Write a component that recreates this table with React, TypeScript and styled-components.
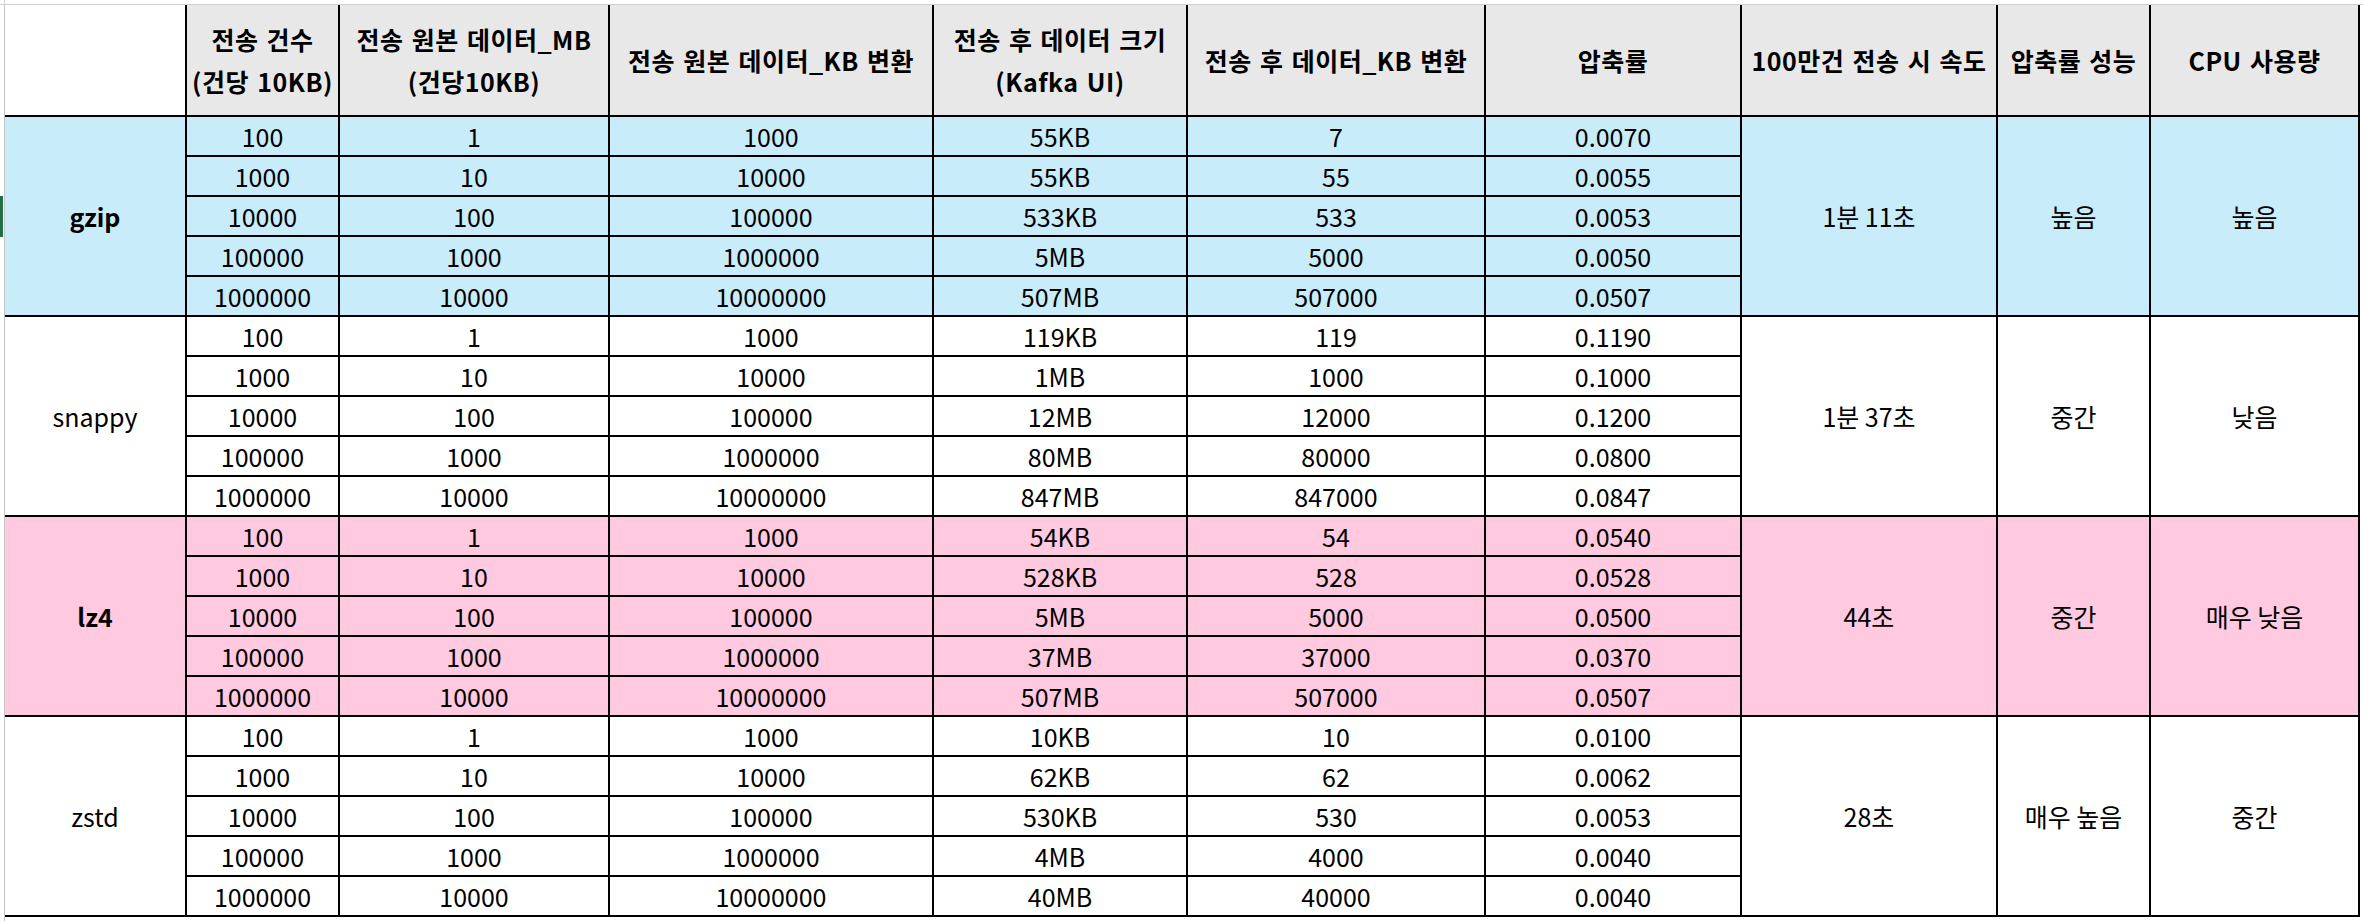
import React from 'react';
import styled, { createGlobalStyle } from 'styled-components';

const GlobalStyle = createGlobalStyle`
  html, body {
    margin: 0;
    padding: 0;
    background: #ffffff;
  }
  body {
    font-family: 'Noto Sans CJK KR', 'Noto Sans', sans-serif;
    color: #000000;
  }
`;

const colors = {
  header: '#e8e8e8',
  blue: '#c9ecfa',
  pink: '#ffc9df',
  white: '#ffffff',
  line: '#000000',
  grid: '#d0d0d0',
  excelGreen: '#1e7145',
};

const columnWidths = [182, 153, 270, 324, 254, 298, 256, 256, 153, 209];

const Page = styled.div`
  display: grid;
  grid-template-columns: 5px auto;
  grid-template-rows: 5px auto;
  width: 2363px;
  height: 921px;
  overflow: hidden;
`;

const Corner = styled.div`
  box-sizing: border-box;
  border-right: 1px solid ${colors.grid};
  border-bottom: 1px solid ${colors.grid};
`;

const TopStrip = styled.div`
  box-sizing: border-box;
  border-bottom: 1px solid ${colors.grid};
`;

const Gutter = styled.div`
  box-sizing: border-box;
  border-right: 1px solid #c4c4c4;
  display: flex;
  flex-direction: column;
`;

const SelectionMark = styled.div`
  margin-top: 191px;
  width: 3px;
  height: 41px;
  background: ${colors.excelGreen};
`;

const Sheet = styled.div`
  display: grid;
  grid-template-columns: ${columnWidths.map((w) => `${w}px`).join(' ')};
  grid-template-rows: 112px repeat(20, 40px);
  align-content: start;
`;

const Cell = styled.div<{ $fill?: string; $bold?: boolean; $span?: number }>`
  box-sizing: border-box;
  display: flex;
  align-items: center;
  justify-content: center;
  text-align: center;
  white-space: nowrap;
  border-right: 2px solid ${colors.line};
  border-bottom: 2px solid ${colors.line};
  background: ${(p) => p.$fill ?? 'transparent'};
  grid-row: ${(p) => (p.$span ? `span ${p.$span}` : 'auto')};
  font-size: 25px;
  font-weight: ${(p) => (p.$bold ? 700 : 400)};
  line-height: 1;
  padding-top: 1px;
`;

const HeaderCell = styled(Cell)`
  flex-direction: column;
  font-size: 25px;
  line-height: 42px;
  font-weight: 700;
  letter-spacing: 0.5px;
  word-spacing: 2px;
  padding-top: 0;
`;

interface Group {
  name: string;
  bold: boolean;
  fill: string;
  rows: string[][];
  speed: string;
  ratio: string;
  cpu: string;
}

const headers: string[][] = [
  [],
  ['전송 건수', '(건당 10KB)'],
  ['전송 원본 데이터_MB', '(건당10KB)'],
  ['전송 원본 데이터_KB 변환'],
  ['전송 후 데이터 크기', '(Kafka UI)'],
  ['전송 후 데이터_KB 변환'],
  ['압축률'],
  ['100만건 전송 시 속도'],
  ['압축률 성능'],
  ['CPU 사용량'],
];

const counts = ['100', '1000', '10000', '100000', '1000000'];
const mb = ['1', '10', '100', '1000', '10000'];
const kb = ['1000', '10000', '100000', '1000000', '10000000'];

function buildRows(sizes: string[], kbAfter: string[], rates: string[]) {
  return counts.map((c, i) => [c, mb[i], kb[i], sizes[i], kbAfter[i], rates[i]]);
}

const groups: Group[] = [
  {
    name: 'gzip',
    bold: true,
    fill: colors.blue,
    rows: buildRows(
      ['55KB', '55KB', '533KB', '5MB', '507MB'],
      ['7', '55', '533', '5000', '507000'],
      ['0.0070', '0.0055', '0.0053', '0.0050', '0.0507'],
    ),
    speed: '1분 11초',
    ratio: '높음',
    cpu: '높음',
  },
  {
    name: 'snappy',
    bold: false,
    fill: colors.white,
    rows: buildRows(
      ['119KB', '1MB', '12MB', '80MB', '847MB'],
      ['119', '1000', '12000', '80000', '847000'],
      ['0.1190', '0.1000', '0.1200', '0.0800', '0.0847'],
    ),
    speed: '1분 37초',
    ratio: '중간',
    cpu: '낮음',
  },
  {
    name: 'lz4',
    bold: true,
    fill: colors.pink,
    rows: buildRows(
      ['54KB', '528KB', '5MB', '37MB', '507MB'],
      ['54', '528', '5000', '37000', '507000'],
      ['0.0540', '0.0528', '0.0500', '0.0370', '0.0507'],
    ),
    speed: '44초',
    ratio: '중간',
    cpu: '매우 낮음',
  },
  {
    name: 'zstd',
    bold: false,
    fill: colors.white,
    rows: buildRows(
      ['10KB', '62KB', '530KB', '4MB', '40MB'],
      ['10', '62', '530', '4000', '40000'],
      ['0.0100', '0.0062', '0.0053', '0.0040', '0.0040'],
    ),
    speed: '28초',
    ratio: '매우 높음',
    cpu: '중간',
  },
];

function GroupRows({ group }: { group: Group }) {
  const { rows, fill } = group;
  return (
    <>
      <Cell $fill={fill} $bold={group.bold} $span={5}>
        {group.name}
      </Cell>
      {rows.map((row, r) => (
        <React.Fragment key={r}>
          {row.map((value, c) => (
            <Cell key={c} $fill={fill}>
              {value}
            </Cell>
          ))}
          {r === 0 && (
            <>
              <Cell $fill={fill} $span={5}>{group.speed}</Cell>
              <Cell $fill={fill} $span={5}>{group.ratio}</Cell>
              <Cell $fill={fill} $span={5}>{group.cpu}</Cell>
            </>
          )}
        </React.Fragment>
      ))}
    </>
  );
}

export default function App() {
  return (
    <>
      <GlobalStyle />
      <Page>
        <Corner />
        <TopStrip />
        <Gutter>
          <SelectionMark />
        </Gutter>
        <Sheet>
          {headers.map((lines, i) => (
            <HeaderCell key={i} $fill={i === 0 ? colors.white : colors.header}>
              {lines.map((line) => (
                <span key={line}>{line}</span>
              ))}
            </HeaderCell>
          ))}
          {groups.map((g) => (
            <GroupRows key={g.name} group={g} />
          ))}
        </Sheet>
      </Page>
    </>
  );
}
